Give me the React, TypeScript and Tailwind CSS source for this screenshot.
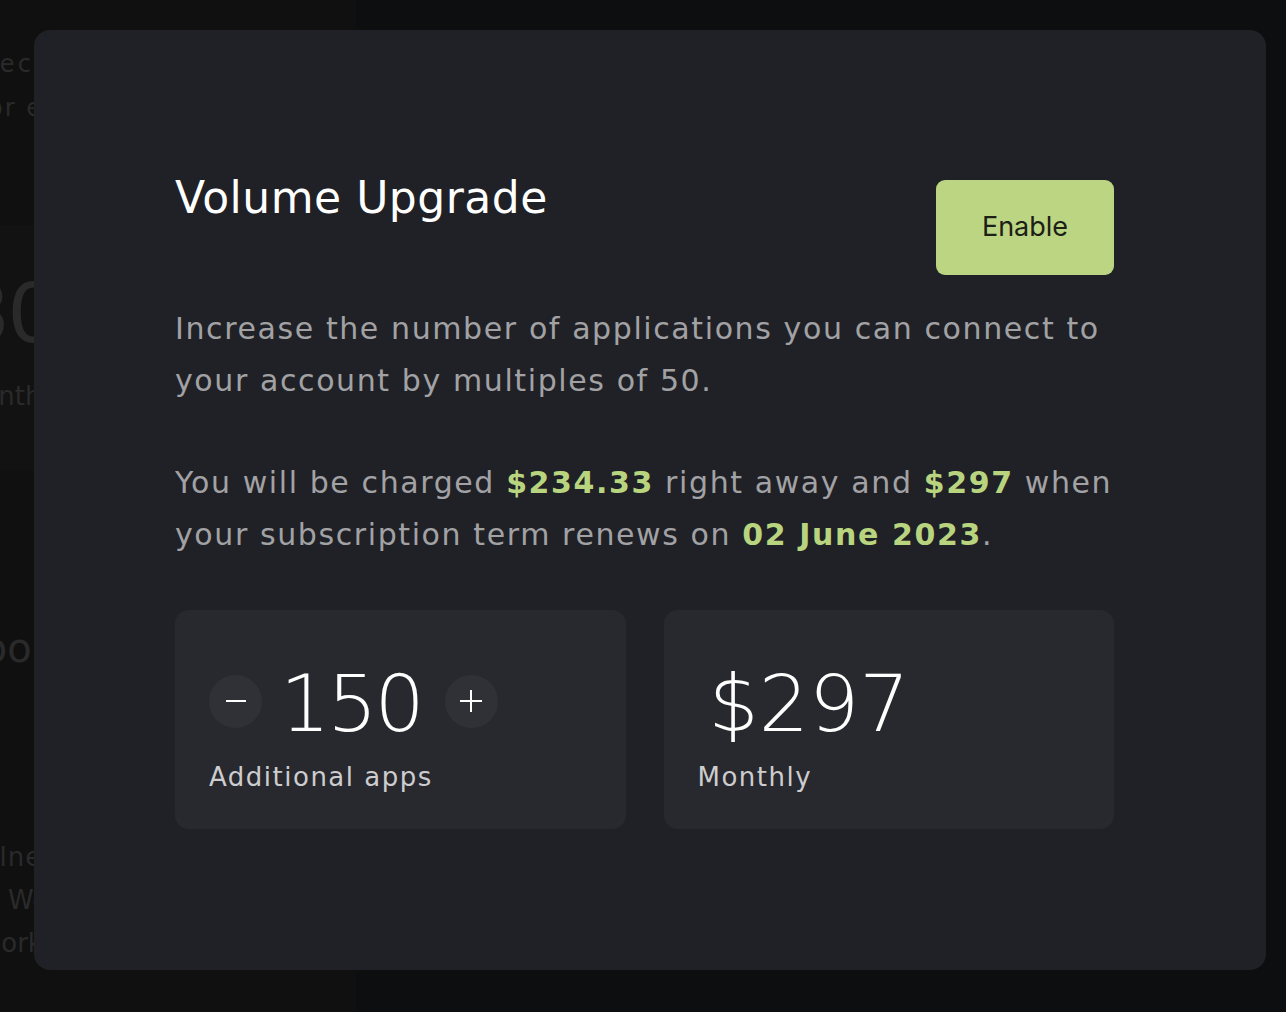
import React, { useState } from "react";

const sans = "font-['DejaVu_Sans',sans-serif]";

const Backdrop = () => {
  return (
    <div className={`w-[356px] h-full bg-[#101010] text-[#2a2a2b] ${sans} overflow-hidden`}>
      <div className="h-[225px] pt-[49px]">
        <div className="text-[24px] leading-[30px] tracking-[3px] whitespace-nowrap -ml-[74px]">Connect</div>
        <div className="mt-[14px] text-[24px] leading-[30px] tracking-[2px] whitespace-nowrap -ml-[12px]">or email</div>
      </div>
      <div className="h-[245px] bg-[#121212] pt-[44px]">
        <div className="text-[82px] leading-[90px] whitespace-nowrap -ml-[91px] tracking-[-3px]">$30</div>
        <div className="mt-[21px] text-[26px] leading-[32px] whitespace-nowrap -ml-[40px]">Monthly</div>
      </div>
      <div className="mt-[154px] text-[40px] leading-[48px] whitespace-nowrap -ml-[40px]">Pool</div>
      <div className="mt-[164px] text-[26px] leading-[43px] whitespace-nowrap">
        <div className="-ml-[35px] tracking-[1px]">Vulnerability</div>
        <div className="ml-[8px]">We</div>
        <div className="-ml-[20px]">work</div>
      </div>
    </div>
  );
};

const Stepper = ({ value, onChange }: { value: number; onChange: (v: number) => void }) => {
  return (
    <div className="flex items-center">
      <button
        onClick={() => onChange(Math.max(0, value - 50))}
        className="mb-[6px] w-[53px] h-[53px] rounded-full bg-[#303136] flex items-center justify-center">
        <span className="block w-[20px] h-[2px] bg-white" />
      </button>
      <span className="ml-[18px] mr-[23px] text-white text-[79px] leading-[80px] font-light tracking-[-3px]">
        {value}
      </span>
      <button
        onClick={() => onChange(value + 50)}
        className="mb-[6px] w-[53px] h-[53px] rounded-full bg-[#303136] flex items-center justify-center relative">
        <span className="block w-[22px] h-[2px] bg-white" />
        <span className="absolute block w-[2px] h-[22px] bg-white" />
      </button>
    </div>
  );
};

const App = () => {
  const [apps, setApps] = useState(150);

  return (
    <div className="relative w-full h-[1012px] bg-[#0d0e10] flex overflow-hidden">
      <Backdrop />

      <div className={`absolute left-[34px] top-[30px] w-[1232px] h-[940px] rounded-[16px] bg-[#202126] pl-[141px] pt-[142px] ${sans}`}>
        <div className="w-[939px]">
          <div className="flex items-start justify-between">
            <h2 className="text-white text-[44px] leading-[52px] font-normal tracking-[0.5px]">Volume Upgrade</h2>
            <button className="mt-[8px] w-[178px] h-[95px] rounded-[9px] bg-[#bbd582] text-[#1c2017] text-[27px] font-['Inter',sans-serif]">
              Enable
            </button>
          </div>

          <p className="mt-[28px] text-[#a2a2a5] text-[30px] leading-[52px] tracking-[1.6px] whitespace-nowrap">
            Increase the number of applications you can connect to
            <br />
            your account by multiples of 50.
          </p>

          <p className="mt-[50px] text-[#a2a2a5] text-[30px] leading-[52px] tracking-[1.6px] whitespace-nowrap">
            You will be charged <span className="font-bold text-[#b9d47f]">$234.33</span> right away and{" "}
            <span className="font-bold text-[#b9d47f]">$297</span> when
            <br />
            your subscription term renews on <span className="font-bold text-[#b9d47f]">02 June 2023</span>.
          </p>

          <div className="mt-[49px] grid grid-cols-2 gap-[38px]">
            <div className="h-[219px] rounded-[14px] bg-[#28292e] pl-[34px] pt-[54px]">
              <Stepper value={apps} onChange={setApps} />
              <div className="mt-[17px] text-[#cdcdcf] text-[26px] leading-[32px] tracking-[1.5px]">Additional apps</div>
            </div>
            <div className="h-[219px] rounded-[14px] bg-[#28292e] pl-[34px] pt-[54px]">
              <div className="ml-[11px] text-white text-[79px] leading-[80px] font-light">$297</div>
              <div className="mt-[17px] text-[#cdcdcf] text-[26px] leading-[32px] tracking-[1.5px]">Monthly</div>
            </div>
          </div>
        </div>
      </div>
    </div>
  );
};

export default App;
